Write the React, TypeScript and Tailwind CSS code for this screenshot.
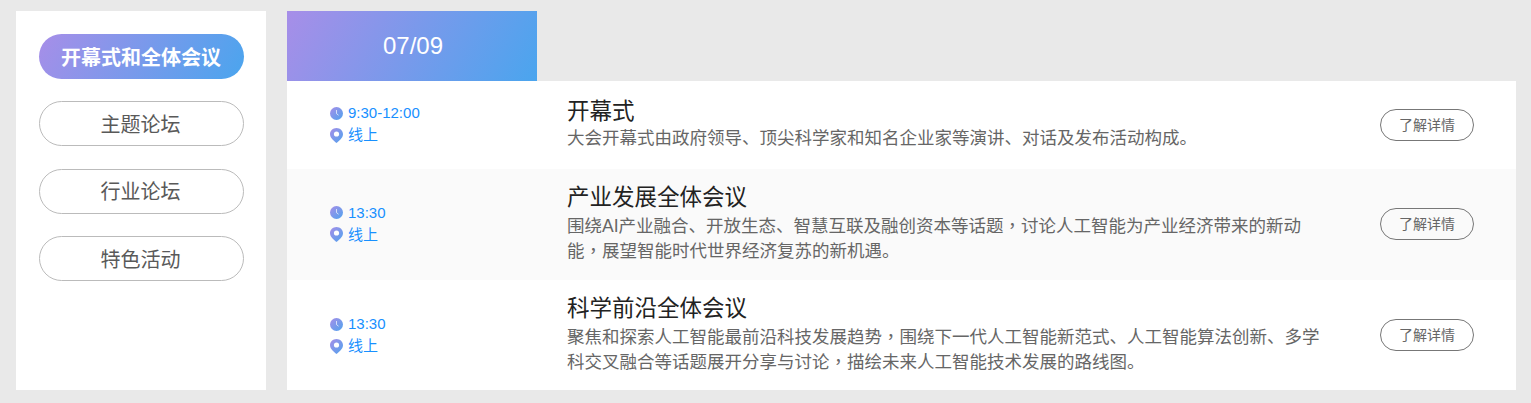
const font = { fontFamily: '"Liberation Sans", "Noto Sans CJK SC", sans-serif' };

function Clock() {
  return (
    <svg width="13" height="13" viewBox="0 0 13 13" className="shrink-0">
      <defs>
        <linearGradient id="c1" x1="0" y1="0" x2="1" y2="1">
          <stop offset="0" stopColor="#a78ee8" />
          <stop offset="1" stopColor="#4fa3ee" />
        </linearGradient>
      </defs>
      <circle cx="6.5" cy="6.5" r="6.5" fill="url(#c1)" />
      <path d="M6.500 3v3.600l2 1.600" fill="none" stroke="#fff" strokeWidth="0.8" opacity="0.85" />
    </svg>
  );
}

function Pin() {
  return (
    <svg width="13" height="15" viewBox="0 0 13 15" className="shrink-0">
      <defs>
        <linearGradient id="p1" x1="0" y1="0" x2="1" y2="1">
          <stop offset="0" stopColor="#a78ee8" />
          <stop offset="1" stopColor="#4fa3ee" />
        </linearGradient>
      </defs>
      <path d="M6.500 0C2.900 0 0 2.800 0 6.300 0 10 4 13 6.500 15 9 13 13 10 13 6.300 13 2.800 10.100 0 6.500 0Z" fill="url(#p1)" />
      <circle cx="6.500" cy="6" r="2.600" fill="#fff" />
    </svg>
  );
}

type RowData = { time: string; title: string; desc: string[]; h: string; bg: string; shift: string; timeShift: string; textShift: string };

const rows: RowData[] = [
  {
    time: "9:30-12:00",
    title: "开幕式",
    desc: ["大会开幕式由政府领导、顶尖科学家和知名企业家等演讲、对话及发布活动构成。"],
    h: "h-[88px]",
    bg: "bg-white",
    shift: "pb-0",
    timeShift: "pb-[2px]",
    textShift: "pb-[4px]",
  },
  {
    time: "13:30",
    title: "产业发展全体会议",
    desc: ["围绕AI产业融合、开放生态、智慧互联及融创资本等话题", "讨论人工智能为产业经济带来的新动能", "展望智能时代世界经济复苏的新机遇。"],
    h: "h-[111px]",
    bg: "bg-[#fafafa]",
    shift: "pb-[1px]",
    timeShift: "pb-[1px]",
    textShift: "pb-[3px]",
  },
  {
    time: "13:30",
    title: "科学前沿全体会议",
    desc: ["聚焦和探索人工智能最前沿科技发展趋势", "围绕下一代人工智能新范式、人工智能算法创新、多学科交叉融合等话题展开分享与讨论", "描绘未来人工智能技术发展的路线图。"],
    h: "h-[110px]",
    bg: "bg-white",
    shift: "pb-0",
    timeShift: "pb-0",
    textShift: "pb-[3px]",
  },
];

function Row({ r }: { r: RowData }) {
  return (
    <div className={`flex items-center ${r.h} ${r.bg} ${r.shift}`}>
      <div className={`w-[280px] shrink-0 pl-[43px] text-[15px] leading-[22px] text-[#1890ff] ${r.timeShift}`}>
        <div className="flex items-center gap-[5px]">
          <Clock />
          <span>{r.time}</span>
        </div>
        <div className="flex items-center gap-[5px]">
          <Pin />
          <span>线上</span>
        </div>
      </div>
      <div className={`w-[760px] shrink-0 ${r.textShift}`}>
        <div className="text-[22.500px] leading-[31px] text-[#222]">{r.title}</div>
        <div className="w-[755px] text-[17.500px] leading-[23px] text-[#666]">
          {r.desc.map((part, i) => (
            <span key={i}>
              {i > 0 && <span className="font-['Noto_Sans_CJK_TC']">，</span>}
              {part}
            </span>
          ))}
        </div>
      </div>
      <div className="ml-[53px] flex h-[32px] w-[94px] shrink-0 items-center justify-center rounded-full border border-[#777] text-[14px] text-[#666]">
        了解详情
      </div>
    </div>
  );
}

function Side({ label, active }: { label: string; active?: boolean }) {
  if (active) {
    return (
      <div className="flex h-[45px] w-[205px] items-center justify-center rounded-full bg-[linear-gradient(120deg,#a78ee8,#4aa5ee)] pt-[3px] pr-[1px] text-[20px] font-bold text-white">
        {label}
      </div>
    );
  }
  return (
    <div className="flex h-[45px] w-[205px] items-center justify-center rounded-full border border-[#bbb] pt-[2px] pr-[2px] text-[20px] text-[#595959]">
      {label}
    </div>
  );
}

export default function App() {
  return (
    <div style={font} className="flex h-[403px] gap-[21px] bg-[#e9e9e9] pb-[13px] pl-[16px] pr-[15px] pt-[11px]">
      <div className="flex w-[250px] shrink-0 flex-col gap-[22.400px] bg-white pl-[23px] pt-[23px]">
        <Side label="开幕式和全体会议" active />
        <Side label="主题论坛" />
        <Side label="行业论坛" />
        <Side label="特色活动" />
      </div>
      <div className="flex min-w-0 flex-1 flex-col">
        <div className="flex h-[70px] w-[250px] items-center justify-center bg-[linear-gradient(120deg,#a78ee8,#4aa5ee)] pl-[2px] text-[24px] text-white">
          07/09
        </div>
        <Row r={rows[0]} />
        <Row r={rows[1]} />
        <Row r={rows[2]} />
      </div>
    </div>
  );
}
